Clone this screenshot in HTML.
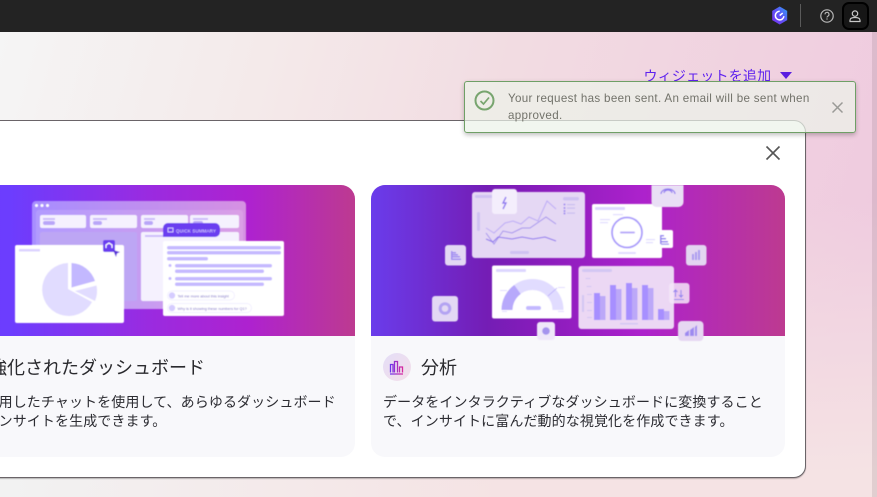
<!DOCTYPE html>
<html lang="ja"><head><meta charset="utf-8"><style>
html,body{margin:0;padding:0;width:877px;height:497px;overflow:hidden}
body{position:relative;font-family:"Liberation Sans","Noto Sans CJK JP",sans-serif;background:#f5e4e4}
div,a,span{position:absolute;white-space:nowrap}
#bg{left:0;top:32px;width:877px;height:465px;background:linear-gradient(178deg,rgba(245,228,228,0) 40%,#f5e3e4 95%),linear-gradient(105deg,#f5f5f5 0,#f4eaea 27%,#f2dce2 52%,#efcbdf 92%)}
#bl{left:0;top:380px;width:500px;height:117px;background:linear-gradient(90deg,#f2f2f2,rgba(242,242,242,0))}
#top{left:0;top:0;width:877px;height:32px;background:#232323}
#sb{left:872px;top:32px;width:5px;height:465px;background:rgba(90,70,80,.13)}
#modal{left:-20px;top:120px;width:824px;height:356px;background:#fff;border:1px solid #6a6468;border-radius:0 12px 12px 0;box-shadow:0 1px 1px rgba(0,0,0,.25)}
.card{top:185px;height:272px;background:#f8f8fb;overflow:hidden}
.card svg{position:absolute;left:0;top:0}
.h{font-size:18px;color:#2a2a2e;line-height:26px;top:170px}
.p{font-size:14px;color:#2c2c32;line-height:19px;top:208px;letter-spacing:.1px}
#link{left:643.5px;top:66px;font-size:14px;line-height:20px;color:#5f22ee;letter-spacing:.2px}
#toast{left:464px;top:81px;width:390px;height:50px;border:1px solid #6f9f66;border-radius:3px;background:rgba(236,243,233,.72);box-shadow:0 2px 5px rgba(0,0,0,.25)}
#tt{left:43px;top:8px;font-size:11.6px;line-height:17px;color:#72726a;letter-spacing:.33px}
</style></head><body>
<div id="bg"></div><div id="bl"></div><div id="sb"></div>
<div id="top"></div>
<svg style="position:absolute;left:760px;top:0" width="117" height="32" viewBox="760 0 117 32">
<defs><linearGradient id="hx" x1="0" y1="1" x2="1" y2="0"><stop offset="0" stop-color="#7a2cf0"/><stop offset=".55" stop-color="#5b57f5"/><stop offset="1" stop-color="#2ea4f5"/></linearGradient></defs>
<path d="M779.7 6.5l7.5 4.4v9.2l-7.5 4.4-7.5-4.4v-9.2z" fill="url(#hx)"/>
<path d="M779.7 11.3a4.3 4.3 0 1 0 4.2 4.9M779.7 15.5l3-2.4" fill="none" stroke="#fff" stroke-width="1.5"/>
<rect x="800" y="4" width="1" height="23" fill="#5a5a5a"/>
<circle cx="827" cy="16" r="6.2" fill="none" stroke="#b8b8b8" stroke-width="1.2"/>
<path d="M825 14.4a2 2 0 1 1 2.8 1.8c-.6.3-.8.6-.8 1.3" fill="none" stroke="#b8b8b8" stroke-width="1.1"/><rect x="826.4" y="18.4" width="1.2" height="1.2" fill="#b8b8b8"/>
<rect x="843" y="3" width="25" height="26" rx="6" fill="#161616" stroke="#000" stroke-width="2"/>
<circle cx="855" cy="13.6" r="2.7" fill="none" stroke="#c8c8c8" stroke-width="1.2"/>
<path d="M850 21.5v-1.3c0-1.6 1.5-2.7 5-2.7s5 1.1 5 2.7v1.3z" fill="none" stroke="#c8c8c8" stroke-width="1.2"/>
</svg>
<a id="link">ウィジェットを追加</a>
<svg style="position:absolute;left:779px;top:71px" width="14" height="9"><path d="M1 1h12L7 8z" fill="#5a1ee0"/></svg>

<div id="modal"></div>
<svg style="position:absolute;left:764px;top:144px" width="18" height="18"><path d="M2.5 2.5l13 13M15.500 2.500l-13 13" stroke="#555" stroke-width="1.600" fill="none"/></svg>

<div class="card" style="left:-20px;width:375px;border-radius:0 14px 14px 0">
<svg width="375" height="272" viewBox="-20 185 375 272">
<defs><linearGradient id="g1" x1="0" y1="0" x2="1" y2="0"><stop offset="0" stop-color="#6b3cff"/><stop offset=".08" stop-color="#6c3dfe"/><stop offset=".45" stop-color="#9a2be0"/><stop offset=".72" stop-color="#ae22cf"/><stop offset="1" stop-color="#bd3a90"/></linearGradient>
<linearGradient id="w1" x1="0" y1="0" x2="1" y2="0"><stop offset="0" stop-color="#a78eff"/><stop offset="1" stop-color="#d691e2"/></linearGradient>
<filter id="soft" x="-5%" y="-5%" width="110%" height="110%"><feGaussianBlur stdDeviation=".45"/></filter></defs>
<rect x="-20" y="185" width="375" height="151" fill="url(#g1)"/>
<g filter="url(#soft)">
<rect x="32" y="201" width="214" height="108" rx="4" fill="url(#w1)"/>
<circle cx="36.500" cy="205.500" r="1.500" fill="#fff"/><circle cx="42" cy="205.500" r="1.500" fill="#fff"/><circle cx="47.500" cy="205.500" r="1.500" fill="#fff"/>
<rect x="36" y="210" width="207" height="99" rx="3" fill="#fff" fill-opacity=".12"/>
<g fill="#f5f1fe"><rect x="40" y="215" width="46" height="13" rx="2"/><rect x="90" y="215" width="47" height="13" rx="2"/><rect x="141" y="215" width="47" height="13" rx="2"/><rect x="190" y="215" width="49" height="13" rx="2"/><rect x="141" y="232" width="98" height="69" rx="2"/></g>
<g fill="#cdbdfa"><rect x="43" y="218" width="12" height="2"/><rect x="43" y="221" width="12" height="4" rx="2" fill="#b9a6f8"/><rect x="93" y="218" width="14" height="2"/><rect x="93" y="221" width="9" height="4" rx="2" fill="#b9a6f8"/><rect x="144" y="218" width="11" height="2"/><rect x="144" y="221" width="9" height="4" rx="2" fill="#b9a6f8"/><rect x="193" y="218" width="15" height="2"/><rect x="193" y="221" width="10" height="4" rx="2" fill="#b9a6f8"/><rect x="145" y="235" width="22" height="2"/></g>
<rect x="40" y="232" width="97" height="69" rx="2" fill="#bda6f4"/>
<rect x="15" y="245" width="109" height="78" rx="2" fill="#fff"/>
<rect x="19" y="249" width="21" height="2.500" fill="#dcd3ff"/>
<path d="M68 263A26.500 26.500 0 1 0 92 302L68 289z" fill="#e1dcff"/>
<path d="M71.500 263A26 26 0 0 1 95 281L71.500 287.500z" fill="#c3b8ff"/>
<path d="M96.500 285.500A26 26 0 0 1 95 301L75 291z" fill="#e1dcff"/>
<rect x="103" y="240" width="12" height="12" rx="2" fill="#6a3df0"/>
<path d="M106 248v-3l3-2 3 2v3" fill="none" stroke="#fff" stroke-width="1.200"/>
<path d="M113 250l7 2-3 1.500-1 3.500z" fill="#5a30d8"/>
<path d="M163 237v-9a5 5 0 0 1 5-5h47a5 5 0 0 1 5 5v4a5 5 0 0 1-5 5z" fill="#6a3df0"/>
<rect x="168" y="228" width="5" height="4" fill="none" stroke="#e8e0ff" stroke-width=".8"/>
<text x="176" y="232.300" font-size="4.400" fill="#e8e0ff" font-family="Liberation Sans,sans-serif" letter-spacing=".2">QUICK SUMMARY</text>
<rect x="163" y="241" width="121" height="75" rx="2" fill="#fff"/>
<g fill="#c5b9ff"><rect x="167" y="246" width="114" height="3.500" rx="1.700"/><rect x="167" y="251" width="114" height="3.500" rx="1.700"/><rect x="167" y="257" width="41" height="3.500" rx="1.700"/><rect x="175" y="264" width="97" height="3.500" rx="1.700"/><rect x="175" y="269.500" width="89" height="3.500" rx="1.700"/><rect x="175" y="277" width="97" height="3.500" rx="1.700"/><rect x="175" y="282.500" width="89" height="3.500" rx="1.700"/><circle cx="170" cy="265.500" r="1.500"/><circle cx="170" cy="278.500" r="1.500"/></g>
<rect x="167.500" y="291" width="67" height="9" rx="4.500" fill="#fff" stroke="#eeeaff" stroke-width=".7"/>
<rect x="167.500" y="303.500" width="84" height="9" rx="4.500" fill="#fff" stroke="#eeeaff" stroke-width=".7"/>
<circle cx="172" cy="295.500" r="3.200" fill="#d5ccff"/><circle cx="172" cy="308" r="3.200" fill="#d5ccff"/>
<text x="177.500" y="297.300" font-size="3.800" fill="#7d70c8" font-family="Liberation Sans,sans-serif">Tell me more about this insight</text>
<text x="177.500" y="309.800" font-size="3.800" fill="#7d70c8" font-family="Liberation Sans,sans-serif">Why is it showing these numbers for Q1?</text>
</g>
</svg>
<div class="h" style="left:9px">強化されたダッシュボード</div>
<div class="p" style="left:4.5px">使用したチャットを使用して、あらゆるダッシュボード<br><span style="position:static;margin-left:0">インサイトを生成できます。</span></div>
</div>

<div class="card" style="left:371px;width:414px;border-radius:14px">
<svg width="414" height="272" viewBox="371 185 414 272">
<defs><linearGradient id="g2" x1="0" y1="0" x2="1" y2="0"><stop offset="0" stop-color="#6a3ceb"/><stop offset=".28" stop-color="#741db5"/><stop offset=".42" stop-color="#8a1cbc"/><stop offset=".66" stop-color="#ad22cc"/><stop offset="1" stop-color="#bd3a90"/></linearGradient></defs>
<rect x="371" y="185" width="414" height="151" fill="url(#g2)"/>
<g filter="url(#soft)">
<rect x="472" y="192" width="113" height="66" rx="3" fill="#e5d8f4"/>
<rect x="475" y="195" width="22" height="3" rx="1.500" fill="#cfc2f2"/><rect x="477" y="212" width="3" height="19" rx="1.500" fill="#cfc2f2"/>
<rect x="563" y="197" width="16" height="3.500" rx="1.700" fill="#cfc2f2"/>
<g fill="#9d88ef"><circle cx="564.500" cy="204.500" r="1"/><circle cx="564.500" cy="208" r="1"/><circle cx="564.500" cy="211" r="1"/><circle cx="564.500" cy="213.500" r="1"/></g>
<g fill="#c9bdf0"><rect x="567" y="204" width="8" height="1.200"/><rect x="567" y="207.500" width="8" height="1.200"/><rect x="567" y="212.500" width="8" height="1.200"/></g>
<path d="M486 228l8 5 11-10 8-2 8 3 8-7 9 4 9-20 9 8" fill="none" stroke="#bcaaf5" stroke-width="1"/>
<path d="M486 233l8 11 9-13 9 2 10-5 8 0 16-11 10 7" fill="none" stroke="#a593ee" stroke-width="1"/>
<path d="M486 239l7 3 5-5 14 2 10-2 11 2 12-2 11 4" fill="none" stroke="#8b72ee" stroke-width="1"/>
<rect x="510" y="251" width="19" height="3" rx="1.500" fill="#cfc2f2"/>
<rect x="492" y="189" width="25" height="25" rx="3" fill="#f4eefc"/>
<path d="M506 197l-3 6h3l-3 6" fill="none" stroke="#8f78f0" stroke-width="1.400"/>
<rect x="445" y="245" width="21" height="20.500" rx="3" fill="#e3d8f4"/>
<g fill="#a08cf2"><rect x="451" y="251" width="1.500" height="9"/><rect x="452" y="252" width="4" height="1.500"/><rect x="452" y="254" width="6" height="1.500"/><rect x="452" y="256" width="8" height="1.500"/><rect x="452" y="258.500" width="9" height="1.500"/></g>
<rect x="432" y="296" width="26" height="25.500" rx="3" fill="#e3d8f4"/>
<circle cx="445" cy="308.500" r="4.800" fill="none" stroke="#b3a3f2" stroke-width="3"/>
<rect x="492" y="265.500" width="79.500" height="53" rx="2" fill="#fff"/>
<rect x="496" y="269" width="30" height="3" rx="1" fill="#ddd6ff"/>
<path d="M507.500 310a25.500 25.500 0 0 1 51 0" fill="none" stroke="#e1dcff" stroke-width="11" transform="translate(-.5 0)"/>
<path d="M507 310a25.500 25.500 0 0 1 10.500-20.500" fill="none" stroke="#b7a9fb" stroke-width="11"/>
<rect x="526" y="306" width="15" height="4" rx="2" fill="#c3b8ff"/>
<path d="M548 296l9-8" stroke="#b7a9fb" stroke-width=".800"/>
<g fill="#e1dcff"><rect x="500" y="290" width="7" height="1"/><rect x="558" y="287" width="7" height="1"/><rect x="502" y="311" width="5" height="1"/><rect x="558" y="311" width="6" height="1"/></g>
<rect x="537" y="322" width="18" height="18" rx="3" fill="#efe7f9"/>
<circle cx="546" cy="331" r="3.800" fill="#a593ee"/>
<rect x="592" y="204" width="70" height="54" rx="2" fill="#fff"/>
<rect x="595" y="207" width="30" height="3" rx="1" fill="#ddd6ff"/>
<circle cx="627" cy="232.500" r="15" fill="none" stroke="#a899fb" stroke-width="1.800"/>
<rect x="620" y="231.500" width="15" height="2" rx="1" fill="#b9abf9"/>
<g fill="#e1dcff"><rect x="613" y="214" width="10" height="1.200"/><rect x="600" y="219" width="10" height="1.200"/><rect x="600" y="222" width="8" height="1.200"/><rect x="646" y="239" width="9" height="1.200"/><rect x="646" y="242" width="7" height="1.200"/><rect x="618" y="252" width="18" height="2" rx="1"/></g>
<path d="M660 230h11a2 2 0 0 1 2 2v14a2 2 0 0 1-2 2h-11z" fill="#fff"/>
<g fill="#9280ef"><rect x="660" y="235" width="1.500" height="9"/><rect x="661" y="235" width="3" height="1.500"/><rect x="661" y="238" width="5" height="1.500"/><rect x="661" y="241" width="7" height="1.500"/><rect x="661" y="243.500" width="8" height="1.200"/></g>
<path d="M651.500 185v17a5 5 0 0 0 5 5h22a5 5 0 0 0 5-5v-17z" fill="#e9dff5"/>
<path d="M661 194a7 5 0 0 1 14 0M664 193a4 3 0 0 1 8 0" fill="none" stroke="#8f78f0" stroke-width="1.200"/>
<rect x="686" y="245" width="20.500" height="20.500" rx="3" fill="#e3d5f1"/>
<g fill="#a99af0"><rect x="692" y="254" width="2" height="6"/><rect x="695" y="252" width="2" height="8"/><rect x="698" y="250" width="2" height="10"/></g>
<rect x="578.500" y="266" width="95.500" height="63" rx="3" fill="#ecd8f4"/>
<rect x="582" y="269" width="30" height="3" rx="1.500" fill="#d3c7f3"/><rect x="582" y="295" width="2" height="17" fill="#d3c7f3"/>
<g fill="#d3c7f3"><rect x="585.500" y="278" width="5" height="1"/><rect x="586.500" y="286" width="5" height="1"/><rect x="587" y="294" width="5" height="1"/><rect x="587" y="302" width="5" height="1"/><rect x="587" y="310" width="5" height="1"/><rect x="587" y="317" width="5" height="1"/><rect x="620" y="323" width="18" height="1.500"/></g>
<g fill="#a78fff"><rect x="594" y="293" width="6" height="27"/><rect x="610" y="285" width="6" height="35"/><rect x="626" y="283" width="6" height="37"/><rect x="642" y="285" width="6" height="35"/><rect x="658" y="309" width="6" height="11"/></g>
<g fill="#bca8f8"><rect x="600" y="296" width="5.500" height="24"/><rect x="616" y="289" width="5.500" height="31"/><rect x="632" y="288" width="5.500" height="32"/><rect x="648" y="288" width="5.500" height="32"/><rect x="664" y="311" width="5.500" height="9"/></g>
<rect x="669" y="283" width="20.500" height="20.500" rx="3" fill="#f5e6f8" fill-opacity=".85"/>
<path d="M675.500 297v-7l-2 2M675.500 290l2 2M681 290v7l-2-2M681 297l2-2M674 299.500h10" fill="none" stroke="#9380ef" stroke-width="1.100"/>
<rect x="678" y="321" width="25.500" height="20" rx="4" fill="#e6d7f2"/>
<path d="M685 333l4-3v6h-4zM690 330l4-3v9h-4zM695 327l2-2v11h-2z" fill="#9d8af0"/>
</g>
</svg>
<svg style="position:absolute;left:11px;top:167px" width="30" height="30" viewBox="0 0 30 30">
<defs><linearGradient id="ic" x1="0" y1="0" x2="1" y2="1"><stop offset="0" stop-color="#e4def7"/><stop offset="1" stop-color="#f4dee9"/></linearGradient><linearGradient id="ib" x1="0" y1="0" x2="1" y2="0"><stop offset="0" stop-color="#6b35ee"/><stop offset="1" stop-color="#d9289c"/></linearGradient></defs>
<circle cx="15" cy="15" r="14" fill="url(#ic)"/>
<path d="M8.500 20.500v-8h2.500v8M12.500 20.500v-11h3v11M17.500 20.500v-5.500h3v5.500M8 22h13" fill="none" stroke="url(#ib)" stroke-width="1.300"/>
</svg>
<div class="h" style="left:50px">分析</div>
<div class="p" style="left:12px">データをインタラクティブなダッシュボードに変換すること<br>で、インサイトに富んだ動的な視覚化を作成できます。</div>
</div>

<div id="toast">
<svg style="position:absolute;left:8px;top:7px" width="23" height="23"><circle cx="11.500" cy="11.500" r="9" fill="none" stroke="#78a56f" stroke-width="2"/><path d="M7.500 12l3 3 5.500-6.500" fill="none" stroke="#78a56f" stroke-width="1.700"/></svg>
<div id="tt">Your request has been sent. An email will be sent when<br>approved.</div>
<svg style="position:absolute;left:365px;top:18px" width="16" height="16"><path d="M2.500 2.500l10 10M12.500 2.500l-10 10" stroke="#9a9a96" stroke-width="1.500" fill="none"/></svg>
</div>
</body></html>
